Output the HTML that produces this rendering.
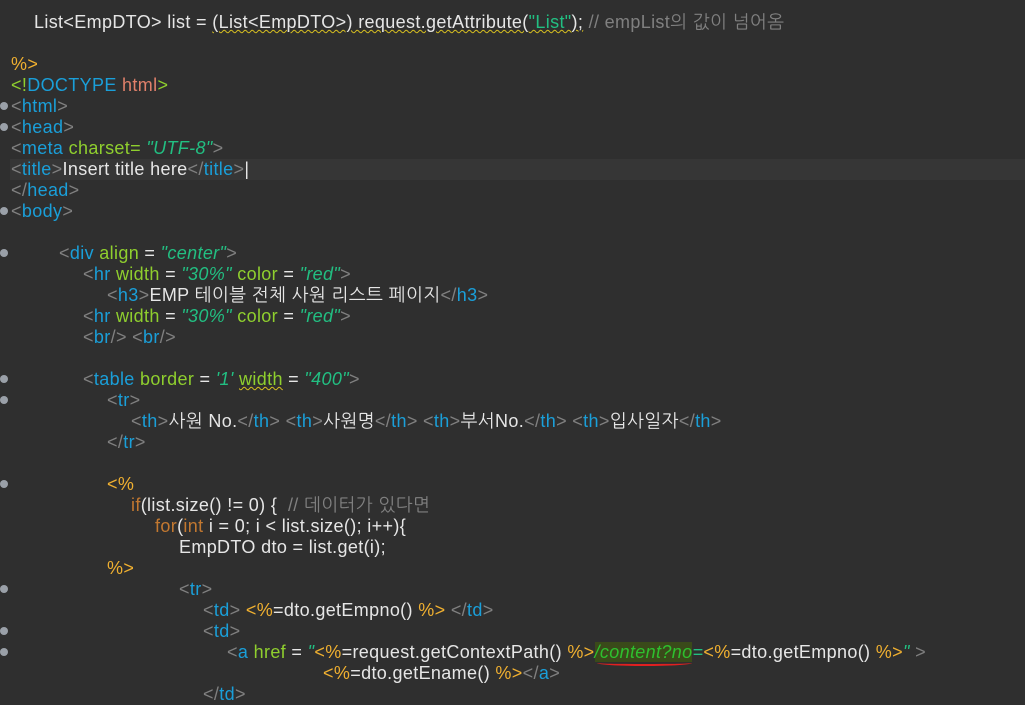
<!DOCTYPE html>
<html><head><meta charset="utf-8"><style>
body{margin:0;width:1025px;height:692px;background:#2f2f2f;overflow:hidden;position:relative;font-family:"Liberation Sans","NanumGothic","Noto Sans CJK KR",sans-serif;font-size:18px;letter-spacing:0.35px;color:#e6e6e6}
.l{position:absolute;white-space:pre;height:21px;line-height:21px}
.b{color:#808080}.t{color:#1a9fd9}.a{color:#8fcf2e}.s{color:#22bf82;font-style:italic}
.j{color:#f0b030}.k{color:#c27830}.c{color:#808080}.d{color:#e0806a}
.f{position:absolute;left:0;width:8px;height:8px;border-radius:50%;background:#9aa0a8}
.hl{position:absolute;left:10px;right:0;top:159px;height:21px;background:#363636}
.w{text-decoration:underline wavy #d8c020;text-decoration-thickness:1px}
.r{position:relative}
.r:after{content:"";position:absolute;left:2px;right:0;bottom:-4px;height:4px;border-bottom:2px solid #e02020;border-radius:0 0 50% 50%}
</style></head><body>
<div class="hl"></div>
<div class="l" style="left:34px;top:12px">List&lt;EmpDTO&gt; list = <span class="w">(List&lt;EmpDTO&gt;) request.getAttribute(<span class="s" style="font-style:normal">"List"</span>);</span> <span class="c">// empList의 값이 넘어옴</span></div>
<div class="l j" style="left:11px;top:54px">%&gt;</div>
<div class="l" style="left:11px;top:75px"><span class="a">&lt;!</span><span class="t">DOCTYPE</span> <span class="d">html</span><span class="a">&gt;</span></div>
<div class="f" style="top:102px"></div><div class="l" style="left:11px;top:96px"><span class="b">&lt;</span><span class="t">html</span><span class="b">&gt;</span></div>
<div class="f" style="top:123px"></div><div class="l" style="left:11px;top:117px"><span class="b">&lt;</span><span class="t">head</span><span class="b">&gt;</span></div>
<div class="l" style="left:11px;top:138px"><span class="b">&lt;</span><span class="t">meta</span> <span class="a">charset=</span> <span class="s">"UTF-8"</span><span class="b">&gt;</span></div>
<div class="l" style="left:11px;top:159px"><span class="b">&lt;</span><span class="t">title</span><span class="b">&gt;</span>Insert title here<span class="b">&lt;/</span><span class="t">title</span><span class="b">&gt;</span>|</div>
<div class="l" style="left:11px;top:180px"><span class="b">&lt;/</span><span class="t">head</span><span class="b">&gt;</span></div>
<div class="f" style="top:207px"></div><div class="l" style="left:11px;top:201px"><span class="b">&lt;</span><span class="t">body</span><span class="b">&gt;</span></div>
<div class="f" style="top:249px"></div><div class="l" style="left:59px;top:243px"><span class="b">&lt;</span><span class="t">div</span> <span class="a">align</span> = <span class="s">"center"</span><span class="b">&gt;</span></div>
<div class="l" style="left:83px;top:264px"><span class="b">&lt;</span><span class="t">hr</span> <span class="a">width</span> = <span class="s">"30%"</span> <span class="a">color</span> = <span class="s">"red"</span><span class="b">&gt;</span></div>
<div class="l" style="left:107px;top:285px"><span class="b">&lt;</span><span class="t">h3</span><span class="b">&gt;</span>EMP 테이블 전체 사원 리스트 페이지<span class="b">&lt;/</span><span class="t">h3</span><span class="b">&gt;</span></div>
<div class="l" style="left:83px;top:306px"><span class="b">&lt;</span><span class="t">hr</span> <span class="a">width</span> = <span class="s">"30%"</span> <span class="a">color</span> = <span class="s">"red"</span><span class="b">&gt;</span></div>
<div class="l" style="left:83px;top:327px"><span class="b">&lt;</span><span class="t">br</span><span class="b">/&gt;</span> <span class="b">&lt;</span><span class="t">br</span><span class="b">/&gt;</span></div>
<div class="f" style="top:375px"></div><div class="l" style="left:83px;top:369px"><span class="b">&lt;</span><span class="t">table</span> <span class="a">border</span> = <span class="s">'1'</span> <span class="a w">width</span> = <span class="s">"400"</span><span class="b">&gt;</span></div>
<div class="f" style="top:396px"></div><div class="l" style="left:107px;top:390px"><span class="b">&lt;</span><span class="t">tr</span><span class="b">&gt;</span></div>
<div class="l" style="left:131px;top:411px"><span class="b">&lt;</span><span class="t">th</span><span class="b">&gt;</span>사원 No.<span class="b">&lt;/</span><span class="t">th</span><span class="b">&gt;</span> <span class="b">&lt;</span><span class="t">th</span><span class="b">&gt;</span>사원명<span class="b">&lt;/</span><span class="t">th</span><span class="b">&gt;</span> <span class="b">&lt;</span><span class="t">th</span><span class="b">&gt;</span>부서No.<span class="b">&lt;/</span><span class="t">th</span><span class="b">&gt;</span> <span class="b">&lt;</span><span class="t">th</span><span class="b">&gt;</span>입사일자<span class="b">&lt;/</span><span class="t">th</span><span class="b">&gt;</span></div>
<div class="l" style="left:107px;top:432px"><span class="b">&lt;/</span><span class="t">tr</span><span class="b">&gt;</span></div>
<div class="f" style="top:480px"></div><div class="l j" style="left:107px;top:474px">&lt;%</div>
<div class="l" style="left:131px;top:495px"><span class="k">if</span>(list.size() != 0) {  <span class="c">// 데이터가 있다면</span></div>
<div class="l" style="left:155px;top:516px"><span class="k">for</span>(<span class="k">int</span> i = 0; i &lt; list.size(); i++){</div>
<div class="l" style="left:179px;top:537px">EmpDTO dto = list.get(i);</div>
<div class="l j" style="left:107px;top:558px">%&gt;</div>
<div class="f" style="top:585px"></div><div class="l" style="left:179px;top:579px"><span class="b">&lt;</span><span class="t">tr</span><span class="b">&gt;</span></div>
<div class="l" style="left:203px;top:600px"><span class="b">&lt;</span><span class="t">td</span><span class="b">&gt;</span> <span class="j">&lt;%</span>=dto.getEmpno() <span class="j">%&gt;</span> <span class="b">&lt;/</span><span class="t">td</span><span class="b">&gt;</span></div>
<div class="f" style="top:627px"></div><div class="l" style="left:203px;top:621px"><span class="b">&lt;</span><span class="t">td</span><span class="b">&gt;</span></div>
<div class="f" style="top:648px"></div><div class="l" style="left:227px;top:642px"><span class="b">&lt;</span><span class="t">a</span> <span class="a">href</span> = <span class="s">"</span><span class="j">&lt;%</span>=request.getContextPath() <span class="j">%&gt;</span><span class="s r" style="color:#2ec02e;background:#3a4a1a">/content?no</span><span class="s">=</span><span class="j">&lt;%</span>=dto.getEmpno() <span class="j">%&gt;</span><span class="s">"</span> <span class="b">&gt;</span></div>
<div class="l" style="left:323px;top:663px"><span class="j">&lt;%</span>=dto.getEname() <span class="j">%&gt;</span><span class="b">&lt;/</span><span class="t">a</span><span class="b">&gt;</span></div>
<div class="l" style="left:203px;top:684px"><span class="b">&lt;/</span><span class="t">td</span><span class="b">&gt;</span></div>
</body></html>
